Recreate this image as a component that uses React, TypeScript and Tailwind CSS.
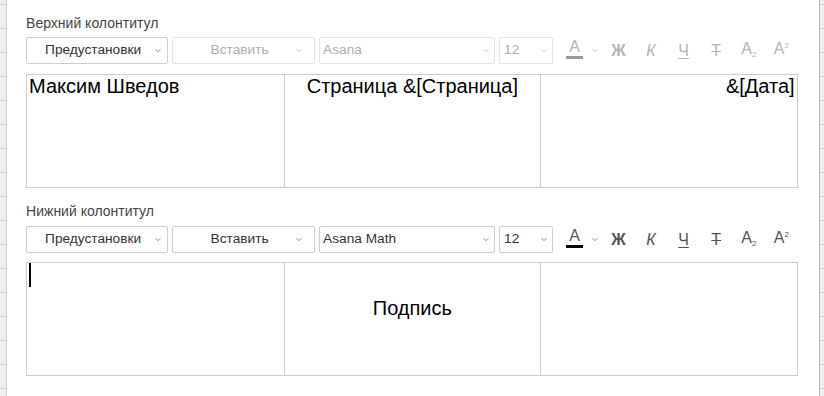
import React from "react";

const Chevron = ({ color }: { color: string }) => (
  <svg width="8" height="5" viewBox="0 0 8 5" className="shrink-0">
    <path d="M1.5 1.2l2.5 2.5 2.5-2.5" fill="none" stroke={color} strokeWidth="1" />
  </svg>
);

interface SelectProps {
  label: string;
  width: string;
  disabled?: boolean;
  center?: boolean;
  textPad: string;
  chevPad: string;
}

const Select = ({ label, width, disabled, center, textPad, chevPad }: SelectProps) => (
  <div
    className={`flex h-full items-center rounded-[2px] border bg-white text-[13.7px] ${width} ${
      disabled ? "border-[#e4e4e4] text-[#adadad]" : "border-[#cfcfcf] text-[#333]"
    }`}
  >
    <span className={`flex-1 truncate ${center ? "text-center" : "text-left"} ${textPad}`}>{label}</span>
    <span className={chevPad}>
      <Chevron color={disabled ? "#c8c8c8" : "#888"} />
    </span>
  </div>
);

const Toolbar = ({ disabled, font }: { disabled?: boolean; font: string }) => {
  const ic = disabled ? "text-[#b4b4b4]" : "text-[#555]";
  return (
    <div className="flex h-[27px] items-center">
      <Select label="Предустановки" width="w-[142px]" center textPad="pl-[5px]" chevPad="mr-[5px]" />
      <div className="w-[4px]" />
      <Select label="Вставить" width="w-[143px]" center disabled={disabled} textPad="pl-[11px]" chevPad="mr-[11px]" />
      <div className="w-[4px]" />
      <Select label={font} width="w-[176px]" disabled={disabled} textPad="pl-[3px]" chevPad="mr-[4px]" />
      <div className="w-[4px]" />
      <Select label="12" width="w-[54px]" disabled={disabled} textPad="pl-[4px]" chevPad="mr-[4px]" />

      {/* font colour */}
      <div className="ml-[13px] mb-[3px] flex items-center">
        <div className="flex flex-col items-center">
          <span className={`h-[14px] text-[16px] leading-[14px] ${ic}`}>A</span>
          <span className={`mt-[2px] h-[3px] w-[17px] ${disabled ? "bg-[#9a9a9a]" : "bg-black"}`} />
        </div>
      </div>
      <span className="ml-[8px]">
        <Chevron color={disabled ? "#c8c8c8" : "#888"} />
      </span>

      <div className={`ml-[3px] flex items-center text-[16px] leading-[16px] ${ic}`}>
        <span className="w-[32.6px] text-center font-bold">Ж</span>
        <span className="w-[32.6px] text-center italic">К</span>
        <span className="w-[32.6px] text-center underline underline-offset-[2px]">Ч</span>
        <span className="w-[32.6px] text-center line-through">Т</span>
        <span className="w-[32.6px] text-center">
          A<span className="relative top-[3px] text-[8px]">2</span>
        </span>
        <span className="w-[32.6px] text-center">
          A<span className="relative top-[-6px] text-[8px]">2</span>
        </span>
      </div>
    </div>
  );
};

const Editor = ({ children }: { children: React.ReactNode }) => (
  <div className="grid h-[114px] grid-cols-3 border border-[#cdcdcd] text-[20px] leading-[23px] text-black">
    {children}
  </div>
);

const Strip = ({ side }: { side: "left" | "right" }) => (
  <div
    className={`flex flex-col ${
      side === "left" ? "w-[8px] border-r border-[#cfcfcf]" : "w-[6px] border-l border-[#bdbdbd]"
    } bg-[#efefef]`}
  >
    <div className="h-[5px] shrink-0 border-b border-[#cfcfcf]" />
    {Array.from({ length: 17 }).map((_, i) => (
      <div key={i} className="h-[24px] shrink-0 border-b border-[#cfcfcf]" />
    ))}
  </div>
);

export default function App() {
  return (
    <div className="flex h-[396px] w-[824px] overflow-hidden bg-white font-['Liberation_Sans',Arial,sans-serif]">
      <Strip side="left" />

      <div className="flex-1 pl-[19px] pr-[21px] pt-[15px]">
        {/* Header */}
        <p className="h-[16px] text-[14px] leading-[16px] text-[#444]">Верхний колонтитул</p>
        <div className="mt-[6px]">
          <Toolbar disabled font="Asana" />
        </div>
        <div className="mt-[10px]">
          <Editor>
            <div className="px-[2px] text-left">Максим Шведов</div>
            <div className="border-l border-[#cdcdcd] px-[2px] text-center">Страница &amp;[Страница]</div>
            <div className="border-l border-[#cdcdcd] px-[2px] text-right">&amp;[Дата]</div>
          </Editor>
        </div>

        {/* Footer */}
        <p className="mt-[15px] h-[16px] text-[14px] leading-[16px] text-[#444]">Нижний колонтитул</p>
        <div className="mt-[7px]">
          <Toolbar font="Asana Math" />
        </div>
        <div className="mt-[9px]">
          <Editor>
            <div className="px-[2px]">
              <span className="block h-[24px] w-[2px] bg-black" />
            </div>
            <div className="border-l border-[#cdcdcd] px-[2px] pt-[34px] text-center">Подпись</div>
            <div className="border-l border-[#cdcdcd]" />
          </Editor>
        </div>
      </div>

      <Strip side="right" />
    </div>
  );
}
